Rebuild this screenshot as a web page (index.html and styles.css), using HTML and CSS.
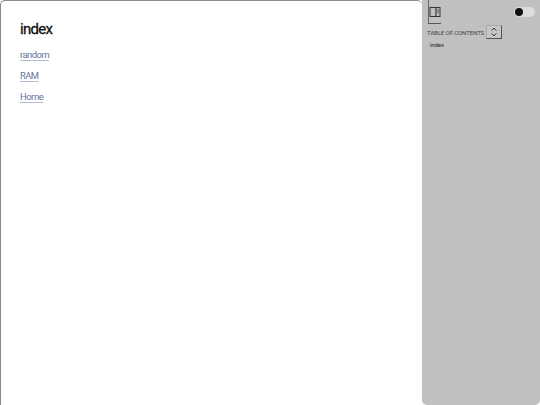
FILE: index.html
```html
<!DOCTYPE html>
<html lang="en">
<head>
  <meta charset="UTF-8">
  <title>index</title>
  <link rel="stylesheet" href="styles.css">
</head>
<body>
  <div class="layout">
    <main class="page">
      <h1>index</h1>
      <p><a href="#">random</a></p>
      <p><a href="#">RAM</a></p>
      <p><a href="#">Home</a></p>
    </main>
    <aside class="sidebar">
      <div class="sidebar-top">
        <button class="icon-btn" aria-label="Toggle sidebar">
          <svg width="12" height="12" viewBox="0 0 12 12" fill="none" stroke="#333" stroke-width="1">
            <rect x="1" y="1.5" width="10" height="9"/>
            <line x1="7" y1="1.5" x2="7" y2="10.5" stroke-width="1.2"/>
            <line x1="8.5" y1="4" x2="10" y2="4"/>
            <line x1="8.5" y1="6" x2="10" y2="6"/>
          </svg>
        </button>
        <div class="toggle"><span class="knob"></span></div>
      </div>
      <div class="toc-head">
        <span class="toc-title">TABLE OF CONTENTS</span>
        <button class="sort-btn" aria-label="Expand">
          <svg width="8" height="10" viewBox="0 0 8 10" fill="none" stroke="#333" stroke-width="1">
            <path d="M1.5 3.5 L4 1.2 L6.5 3.5"/>
            <path d="M1.5 6.5 L4 8.8 L6.5 6.5"/>
          </svg>
        </button>
      </div>
      <div class="toc-item">index</div>
    </aside>
  </div>
</body>
</html>
```

FILE: styles.css
```css
html, body {
  margin: 0;
  padding: 0;
  height: 100%;
  background: #fff;
}

body {
  font-family: "Roboto", "Liberation Sans", sans-serif;
  overflow: hidden;
}

.layout {
  display: flex;
  height: 405px;
}

.page {
  flex: 1;
  box-sizing: border-box;
  padding: 19px 19px;
  border-left: 1px solid #8a8a8a;
  border-top: 1px solid #8a8a8a;
  border-top-left-radius: 5px;
  border-top-right-radius: 5px;
}

.page h1 {
  margin: 0 0 10px;
  font-size: 15px;
  line-height: 18px;
  font-weight: 400;
  letter-spacing: -0.7px;
  color: #111;
  -webkit-text-stroke: 0.3px #111;
}

.page p {
  margin: 0 0 8px;
  font-size: 9.5px;
  line-height: 13px;
  letter-spacing: -0.6px;
}

.page a {
  color: #66749f;
  text-decoration: underline;
  text-decoration-color: #b4bbd2;
  text-underline-offset: 2px;
}

.sidebar {
  width: 118px;
  box-sizing: border-box;
  padding: 0 5px 0 6px;
  background: #c0c0c0;
  border-bottom-left-radius: 5px;
  border-bottom-right-radius: 5px;
}

.sidebar-top {
  display: flex;
  justify-content: space-between;
  align-items: flex-start;
}

.icon-btn {
  width: 13px;
  height: 24px;
  padding: 0;
  display: flex;
  align-items: center;
  justify-content: center;
  background: none;
  border: none;
  border-left: 1px solid #666;
  border-bottom: 1px solid #555;
}

.toggle {
  width: 20px;
  height: 10px;
  margin-top: 7px;
  border-radius: 5px;
  background: #dcdcdc;
  display: flex;
  align-items: center;
  padding-left: 1px;
}

.knob {
  width: 8px;
  height: 8px;
  border-radius: 50%;
  background: #111;
}

.toc-head {
  display: flex;
  align-items: center;
  gap: 2px;
  margin: 1px 0 0 -1px;
}

.toc-title {
  font-size: 6px;
  letter-spacing: -0.09px;
  color: #444;
  white-space: nowrap;
}

.sort-btn {
  width: 16px;
  height: 14px;
  padding: 0;
  display: flex;
  align-items: center;
  justify-content: center;
  background: #c6c6c6;
  border: 1px solid #555;
  border-top-color: #aaa;
  border-left-color: #aaa;
}

.toc-item {
  margin: 2px 0 0 2px;
  font-size: 6px;
  letter-spacing: -0.1px;
  color: #222;
}
```
